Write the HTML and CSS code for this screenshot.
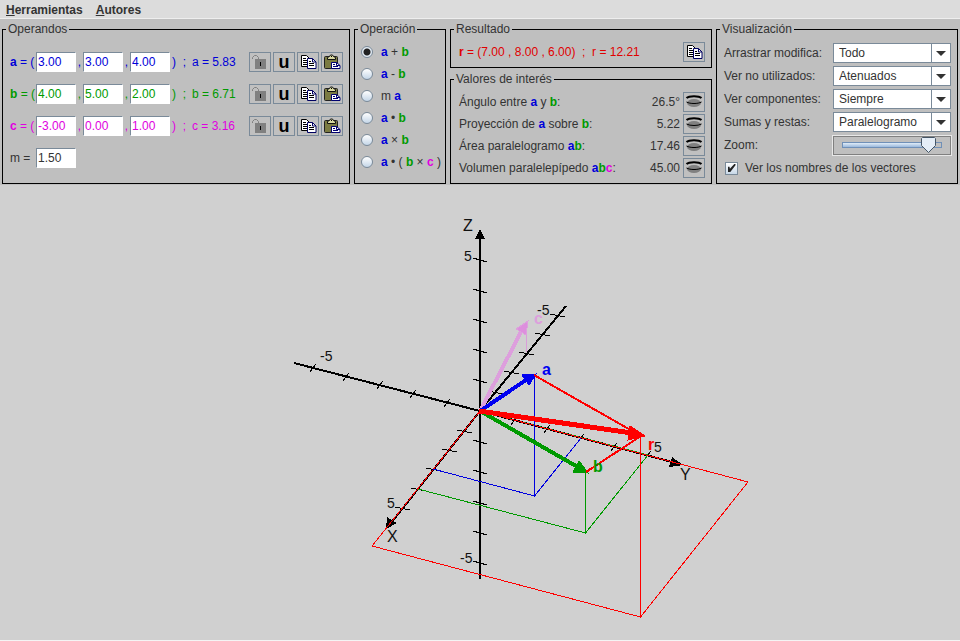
FILE: index.html
```html
<!DOCTYPE html>
<html lang="es">
<head>
<meta charset="utf-8">
<title>Vectores</title>
<link rel="stylesheet" href="styles.css">
</head>
<body>
<svg class="defs" aria-hidden="true">
  <symbol id="lock" viewBox="0 0 20 18">
    <path d="M2.500 6V4.500L4.500 2.500H6.500L8.500 4.500V6" fill="none" stroke="#808080"/>
    <rect x="5" y="6" width="11" height="10" fill="#808080"/>
    <rect x="10" y="9" width="1" height="4" fill="#000"/>
  </symbol>
  <symbol id="copy" viewBox="0 0 20 18">
    <path d="M3.500 2.500h5l3 3v8h-8z" fill="#fff" stroke="#000"/>
    <path d="M5 5.500h3M5 7.500h5M5 9.500h5M5 11.500h5" stroke="#000"/>
    <path d="M9.500 5.500h5l3.500 3.500v6.500h-8.500z" fill="#fff" stroke="#000060"/>
    <path d="M14.500 5.500v3.500h3.500" fill="none" stroke="#000060"/>
    <path d="M11 8.500h2M11 10.500h5M11 12.500h5" stroke="#000"/>
  </symbol>
  <symbol id="paste" viewBox="0 0 20 18">
    <rect x="2.500" y="3.500" width="13" height="12" rx="1" fill="#7b7b42" stroke="#222"/>
    <path d="M5.500 6.500v-2l2-1 1-1.500h2l1 1.500 2 1v2z" fill="#d8d8a0" stroke="#111"/>
    <rect x="9" y="3" width="1" height="1" fill="#000"/>
    <path d="M9.500 9.500h5l3.500 3v3h-8.500z" fill="#fff" stroke="#000070"/>
    <path d="M14.500 9.500v3h3.500M11 11.500h2M11 13.500h5" fill="none" stroke="#000070"/>
  </symbol>
  <symbol id="eye" viewBox="0 0 20 18">
    <ellipse cx="10" cy="10" rx="7" ry="4" fill="#808080"/>
    <path d="M2.500 5C5 2.500 15 2.500 17.500 5" fill="none" stroke="#000" stroke-width="2"/>
    <path d="M2.500 9C6 11 14 11 17.500 9" fill="none" stroke="#000" stroke-width="1"/>
  </symbol>
  <symbol id="arrow" viewBox="0 0 10 5"><path d="M0 0h10L5 5z" fill="#333"/></symbol>
</svg>

<nav class="menubar">
  <a href="#h"><u>H</u>erramientas</a>
  <a href="#a"><u>A</u>utores</a>
</nav>

<div class="panels">
  <fieldset class="operands">
    <legend>Operandos</legend>
    <div class="operand a">
      <span><b>a</b> = (</span>
      <input type="text" value="3.00" aria-label="a x"><i>,</i>
      <input type="text" value="3.00" aria-label="a y"><i>,</i>
      <input type="text" value="4.00" aria-label="a z">
      <span class="close">) &nbsp;;</span><span>a = 5.83</span>
      <div class="tools">
        <button type="button" aria-label="Bloquear a"><svg><use href="#lock"/></svg></button>
        <button type="button" class="unit">u</button>
        <button type="button" aria-label="Copiar a"><svg><use href="#copy"/></svg></button>
        <button type="button" aria-label="Pegar a"><svg><use href="#paste"/></svg></button>
      </div>
    </div>
    <div class="operand b">
      <span><b>b</b> = (</span>
      <input type="text" value="4.00" aria-label="b x"><i>,</i>
      <input type="text" value="5.00" aria-label="b y"><i>,</i>
      <input type="text" value="2.00" aria-label="b z">
      <span class="close">) &nbsp;;</span><span>b = 6.71</span>
      <div class="tools">
        <button type="button" aria-label="Bloquear b"><svg><use href="#lock"/></svg></button>
        <button type="button" class="unit">u</button>
        <button type="button" aria-label="Copiar b"><svg><use href="#copy"/></svg></button>
        <button type="button" aria-label="Pegar b"><svg><use href="#paste"/></svg></button>
      </div>
    </div>
    <div class="operand c">
      <span><b>c</b> = (</span>
      <input type="text" value="-3.00" aria-label="c x"><i>,</i>
      <input type="text" value="0.00" aria-label="c y"><i>,</i>
      <input type="text" value="1.00" aria-label="c z">
      <span class="close">) &nbsp;;</span><span>c = 3.16</span>
      <div class="tools">
        <button type="button" aria-label="Bloquear c"><svg><use href="#lock"/></svg></button>
        <button type="button" class="unit">u</button>
        <button type="button" aria-label="Copiar c"><svg><use href="#copy"/></svg></button>
        <button type="button" aria-label="Pegar c"><svg><use href="#paste"/></svg></button>
      </div>
    </div>
    <div class="operand">
      <label for="m">m =</label>
      <input type="text" id="m" value="1.50">
    </div>
  </fieldset>

  <fieldset class="operation">
    <legend>Operación</legend>
    <label><input type="radio" name="op" checked><span><b class="a">a</b> + <b class="b">b</b></span></label>
    <label><input type="radio" name="op"><span><b class="a">a</b> - <b class="b">b</b></span></label>
    <label><input type="radio" name="op"><span>m <b class="a">a</b></span></label>
    <label><input type="radio" name="op"><span><b class="a">a</b> • <b class="b">b</b></span></label>
    <label><input type="radio" name="op"><span><b class="a">a</b> × <b class="b">b</b></span></label>
    <label><input type="radio" name="op"><span><b class="a">a</b> • ( <b class="b">b</b> × <b class="c">c</b> )</span></label>
  </fieldset>

  <div class="stack">
    <fieldset class="rows">
      <legend>Resultado</legend>
      <div class="row r">
        <span><b>r</b> = (7.00 , 8.00 , 6.00) &nbsp;; &nbsp;r = 12.21</span>
        <button type="button" aria-label="Copiar resultado"><svg><use href="#copy"/></svg></button>
      </div>
    </fieldset>
    <fieldset class="rows">
      <legend>Valores de interés</legend>
      <div class="row"><span>Ángulo entre <b class="a">a</b> y <b class="b">b</b>:</span><output>26.5°</output><button type="button" aria-label="Ver ángulo"><svg><use href="#eye"/></svg></button></div>
      <div class="row"><span>Proyección de <b class="a">a</b> sobre <b class="b">b</b>:</span><output>5.22</output><button type="button" aria-label="Ver proyección"><svg><use href="#eye"/></svg></button></div>
      <div class="row"><span>Área paralelogramo <b class="a">a</b><b class="b">b</b>:</span><output>17.46</output><button type="button" aria-label="Ver área"><svg><use href="#eye"/></svg></button></div>
      <div class="row"><span>Volumen paralelepípedo <b class="a">a</b><b class="b">b</b><b class="c">c</b>:</span><output>45.00</output><button type="button" aria-label="Ver volumen"><svg><use href="#eye"/></svg></button></div>
    </fieldset>
  </div>

  <fieldset class="view">
    <legend>Visualización</legend>
    <div class="setting"><label for="drag">Arrastrar modifica:</label><div class="combo"><select id="drag"><option>Todo</option></select><svg><use href="#arrow"/></svg></div></div>
    <div class="setting"><label for="unused">Ver no utilizados:</label><div class="combo"><select id="unused"><option>Atenuados</option></select><svg><use href="#arrow"/></svg></div></div>
    <div class="setting"><label for="comp">Ver componentes:</label><div class="combo"><select id="comp"><option>Siempre</option></select><svg><use href="#arrow"/></svg></div></div>
    <div class="setting"><label for="sums">Sumas y restas:</label><div class="combo"><select id="sums"><option>Paralelogramo</option></select><svg><use href="#arrow"/></svg></div></div>
    <div class="setting"><label for="zoom">Zoom:</label><div class="slider"><input type="range" id="zoom" value="94"></div></div>
    <label class="check"><input type="checkbox" checked><span>Ver los nombres de los vectores</span></label>
  </fieldset>
</div>

<svg class="scene" viewBox="0 185 960 455" role="img" aria-label="Vectores en el espacio">
  <g shape-rendering="crispEdges" fill="none" stroke-width="1">
    <g stroke="#000" stroke-width="2">
      <path d="M480 236V579"/>
      <path d="M294 363L480 411"/>
      <path d="M566 306L480 411"/>
      <path d="M480 411L676 463"/>
      <path d="M480 411L391 523"/>
    </g>
    <g fill="#000">
      <path d="M480 229L485 239H475z"/>
      <path d="M683 465L672 457L669 467z"/>
      <path d="M386 529L387 517L397 523z"/>
    </g>
    <path stroke="#000" d="M473 258l14 4M473 289l14 4M473 319l14 4M473 349l14 4M473 379l14 4M473 440l14 4M473 470l14 4M473 501l14 4M473 531l14 4M473 561l14 4"/>
    <path stroke="#000" d="M457 430l15 3M442 449l15 3M426 468l15 3M411 488l15 3M395 507l15 3M488 391l15 3M504 371l15 3M519 352l15 3M535 333l15 3M550 314l15 3"/>
    <path stroke="#000" d="M310 372l6-8M343 381l6-8M377 389l6-8M410 398l6-8M444 407l6-8M511 425l6-8M544 433l6-8M578 442l6-8M611 451l6-8M645 459l6-8"/>
    <path stroke="#009a00" d="M480 411L648 455L585.500 533L418 489M585.500 472V533"/>
    <path stroke="#f00" d="M480 411L748 482L640.500 617L372 546L480 411M640.500 436V617"/>
    <path stroke="#0000e0" d="M433 469L534.500 496L581 438M534.500 375V496"/>
    <path stroke="#d99fd9" d="M526.500 323V352"/>
    <g stroke="#dd9fdd"><path stroke-width="4" d="M480 411L522 330"/><path fill="#dd8fdd" d="M528 321L516 329L526 335z"/></g>
    <g stroke="#0000f0"><path stroke-width="4" d="M480 411L526 380"/><path fill="#0000f0" d="M536 374L522 375L529 385z"/></g>
    <g stroke="#009a00"><path stroke-width="4" d="M480 411L576 466"/><path fill="#009a00" d="M588 473L579 461L573 472z"/></g>
    <path stroke="#f00" stroke-width="2" d="M534 375L641 436L586 472"/>
    <g stroke="#f00"><path stroke-width="5" d="M479 411L632 433"/><path fill="#f00" d="M645 436L630 426L628 440z"/></g>
  </g>
  <g class="ticks">
    <text x="464" y="261">5</text><text x="460" y="563">-5</text>
    <text x="320" y="361">-5</text><text x="654" y="452">5</text>
    <text x="537" y="315">-5</text><text x="387" y="508">5</text>
  </g>
  <g class="axes"><text x="463" y="231">Z</text><text x="680" y="480">Y</text><text x="387" y="542">X</text></g>
  <g class="names">
    <text x="542" y="375" fill="#0000f0">a</text><text x="593" y="472" fill="#009a00">b</text>
    <text x="534" y="324" fill="#dd9fdd">c</text><text x="648" y="450" fill="#f00">r</text>
  </g>
</svg>
</body>
</html>
```

FILE: styles.css
```css
* { box-sizing: border-box; }

body {
  margin: 0;
  min-height: 100vh;
  display: flex;
  flex-direction: column;
  background: #d0d0d0;
  border-bottom: 1px solid #f4f4f4;
  color: #333;
  font: 12px/14px "Liberation Sans", Arial, sans-serif;
}

input, select, button { font: inherit; color: inherit; margin: 0; }

.defs { position: absolute; width: 0; height: 0; }

.menubar {
  display: flex;
  gap: 13px;
  height: 19px;
  padding: 0 6px;
  background: #dcdcdc;
  border-bottom: 1px solid #eee;
  font-weight: bold;
  line-height: 20px;
}
.menubar a { color: #333; text-decoration: none; }

.panels {
  display: grid;
  grid-template-columns: minmax(348px, 348fr) minmax(92px, 92fr) minmax(262px, 262fr) minmax(242px, 242fr);
  gap: 4px;
  padding: 3px 2px 1px;
  background: #bfbfbf;
}

fieldset {
  min-width: 0;
  margin: 0;
  padding: 6px 6px 5px 8px;
  border: 1px solid #000;
}
legend { margin-left: -5px; padding: 0 2px; line-height: 14px; }

.a { color: #0000d8; }
.b { color: #009a00; }
.c { color: #e000e0; }
.r { color: #e00000; }

button {
  width: 22px;
  height: 20px;
  padding: 0;
  border: 1px solid #7a8a99;
  background: #c0c0c0;
}
button svg { display: block; width: 20px; height: 18px; }

.operands { padding: 16px 6px 5px 7px; }
.operands legend { margin-left: -4px; }
.operand {
  display: grid;
  grid-template-columns: 26px 40px 7px 40px 7px 40px 22px 1fr auto;
  align-items: center;
  height: 20px;
}
.operand + .operand { margin-top: 12px; }
.operand i { font-style: normal; text-align: center; }
.operand input {
  width: 100%;
  height: 20px;
  padding: 0 1px;
  border: 1px solid #7a8a99;
  border-right-color: #fff;
  border-bottom-color: #fff;
  background: #fff;
  outline: none;
}
.close { padding-left: 2px; }
.tools { display: flex; gap: 2px; }
.unit { color: #000; font: bold 18px/16px "Liberation Sans", Arial, sans-serif; }

.operation { padding-left: 6px; padding-right: 0; }
.operation legend { margin-left: -3px; }
.operation label { display: flex; align-items: center; gap: 8px; height: 20px; white-space: nowrap; }
.operation label + label { margin-top: 2px; }
input[type="radio"] {
  appearance: none;
  width: 12px;
  height: 12px;
  border: 1px solid #7a8a99;
  border-radius: 50%;
  background: linear-gradient(#fff, #c4d6e8);
}
input[type="radio"]:checked {
  background: radial-gradient(circle, #222 0 3px, #e4ecf4 4px);
}

.stack { display: flex; flex-direction: column; gap: 4px; }
.row { display: flex; align-items: center; gap: 3px; height: 20px; white-space: nowrap; }
.row + .row { margin-top: 2px; }
.row span { flex: 1; }

.view { padding-top: 7px; padding-left: 7px; }
.view legend { margin-left: -4px; }
.setting { display: grid; grid-template-columns: 1fr 118px; align-items: center; height: 20px; margin-bottom: 3px; }
.combo { position: relative; }
.combo select {
  appearance: none;
  display: block;
  width: 100%;
  height: 20px;
  padding: 0 20px 0 5px;
  border: 1px solid #7a8a99;
  border-radius: 0;
  background: linear-gradient(90deg, #fff 97px, #7a8a99 97px, #7a8a99 98px, #fff 98px);
}
.combo svg { position: absolute; right: 5px; top: 8px; width: 10px; height: 5px; pointer-events: none; }

.slider {
  display: flex;
  height: 19px;
  padding: 0 8px;
  border: 1px solid #808080;
  outline: 1px solid #e8e8e8;
  outline-offset: 0;
}
input[type="range"] { appearance: none; width: 100%; height: 17px; background: none; }
input[type="range"]::-webkit-slider-runnable-track {
  height: 6px;
  border: 1px solid #7090b8;
  background: linear-gradient(90deg, transparent 80%, #bfbfbf 80%), linear-gradient(#e0ecf8, #9ab8dc);
}
input[type="range"]::-webkit-slider-thumb {
  appearance: none;
  width: 15px;
  height: 16px;
  margin-top: -6px;
  background: url("data:image/svg+xml,%3Csvg xmlns='http://www.w3.org/2000/svg' width='15' height='16'%3E%3Cpath d='M1.500 .5h12l1 1v7l-7 7-7-7v-7z' fill='%23e4edf7' stroke='%23445566'/%3E%3C/svg%3E");
}

.check { display: flex; align-items: center; gap: 7px; height: 20px; padding-left: 1px; }
input[type="checkbox"] {
  appearance: none;
  display: grid;
  place-items: center;
  width: 13px;
  height: 13px;
  border: 1px solid #7a8a99;
  background: linear-gradient(#fff, #c8d8e8);
}
input[type="checkbox"]:checked::before {
  content: "";
  width: 8px;
  height: 8px;
  background: #222;
  clip-path: polygon(0 35%, 25% 35%, 30% 60%, 85% 0, 100% 0, 100% 15%, 35% 100%, 0 100%);
}

.scene { flex: 1; display: block; width: 100%; min-height: 0; }
.ticks text { font-size: 14px; fill: #111; }
.axes text { font-size: 16px; fill: #111; }
.names text { font-size: 16px; font-weight: bold; }
```
